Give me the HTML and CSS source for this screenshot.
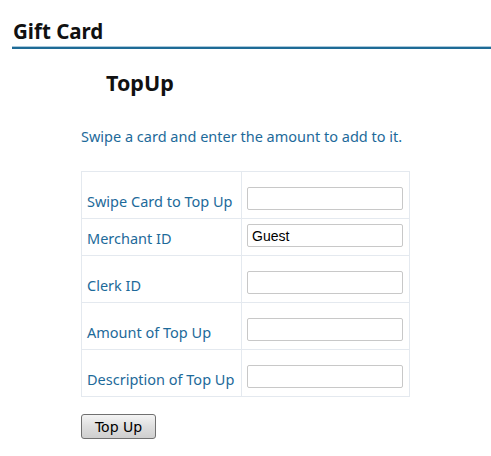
FILE: index.html
```html
<!DOCTYPE html>
<html lang="en">

<head>
    <meta charset="UTF-8">
    <meta name="viewport" content="width=device-width, initial-scale=1.0">
    <title>Gift Card - TopUp</title>
    <link rel="stylesheet" href="styles.css">
</head>

<body>
    <div id="page">
        <h1 class="pageTitle">Gift Card</h1>
        <div id="content">
            <h2 class="formTitle">TopUp</h2>
            <p class="hint">Swipe a card and enter the amount to add to it.</p>
            <form>
                <table class="topup">
                    <tr class="tall">
                        <td class="lbl"><label for="card">Swipe Card to Top Up</label></td>
                        <td class="fld"><input type="text" id="card" name="card"></td>
                    </tr>
                    <tr class="short">
                        <td class="lbl"><label for="merchant">Merchant ID</label></td>
                        <td class="fld"><input type="text" id="merchant" name="merchant" value="Guest"></td>
                    </tr>
                    <tr class="tall">
                        <td class="lbl"><label for="clerk">Clerk ID</label></td>
                        <td class="fld"><input type="text" id="clerk" name="clerk"></td>
                    </tr>
                    <tr class="tall">
                        <td class="lbl"><label for="amount">Amount of Top Up</label></td>
                        <td class="fld"><input type="text" id="amount" name="amount"></td>
                    </tr>
                    <tr class="tall">
                        <td class="lbl"><label for="desc">Description of Top Up</label></td>
                        <td class="fld"><input type="text" id="desc" name="desc"></td>
                    </tr>
                </table>
                <div class="button">
                    <input type="submit" value="Top Up">
                </div>
            </form>
        </div>
    </div>
</body>

</html>
```

FILE: styles.css
```css
* {
    box-sizing: border-box;
    margin: 0;
    padding: 0;
}
body {
    font-family: "Noto Sans", "Open Sans", sans-serif;
    background-color: #fff;
}
#page {
    padding: 0 0 0 12px;
}
.pageTitle {
    font-size: 20.5px;
    font-weight: bold;
    color: #111;
    padding: 18px 0 0 1px;
    line-height: 26px;
    height: 49px;
    border-bottom: solid 2px #1e6b96;
    box-shadow: 0 -1px 0 #a9c9dc inset;
}
#content {
    padding-left: 69px;
}
.formTitle {
    font-size: 21.5px;
    font-weight: bold;
    color: #111;
    margin: 20px 0 0 25px;
    line-height: 28px;
}
.hint {
    font-size: 14.5px;
    color: #1d6a9a;
    margin-top: 29px;
    line-height: 20px;
}
.topup {
    border-collapse: collapse;
    margin-top: 25px;
    width: 329px;
}
.topup td {
    border: solid 1px #e4e9ef;
    vertical-align: bottom;
}
.tall td {
    height: 47px;
}
.short td {
    height: 37px;
}
.lbl {
    width: 160px;
    padding: 0 4px 7px 5px;
    font-size: 14.5px;
    color: #1d6a9a;
    line-height: 20px;
    white-space: nowrap;
}
.fld {
    padding: 0 6px 8px 5px;
}
.fld input {
    display: block;
    width: 156px;
    height: 23px;
    border: solid 1px #c8c8c8;
    border-radius: 2px;
    font-family: "Liberation Sans", Arial, sans-serif;
    font-size: 14px;
    padding: 0 4px;
    color: #000;
}
.button {
    padding-top: 17px;
}
.button input {
    width: 75px;
    height: 25px;
    font-family: "DejaVu Sans", sans-serif;
    font-size: 14px;
    color: #000;
    border: solid 1px #707070;
    border-radius: 3px;
    background: linear-gradient(#f4f4f4, #dedede 50%, #cfcfcf);
}
```
